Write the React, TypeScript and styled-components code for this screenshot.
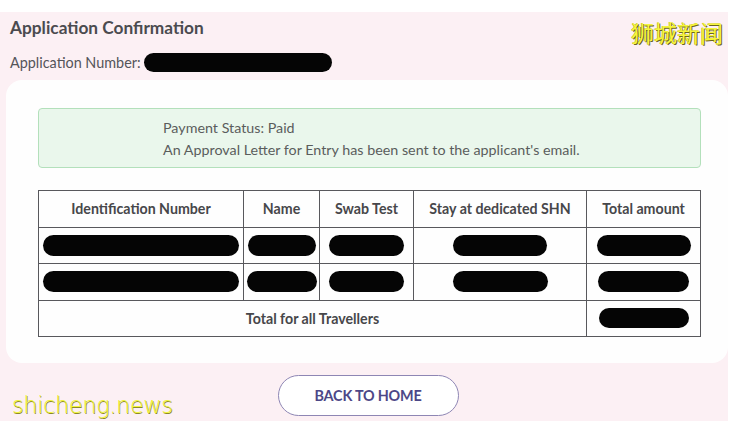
import styled, { createGlobalStyle } from 'styled-components';

const GlobalStyle = createGlobalStyle`
  html, body {
    margin: 0;
    padding: 0;
    background: #ffffff;
  }
  body {
    font-family: Lato, 'Open Sans', sans-serif;
  }
`;

const Page = styled.div`
  width: 735px;
  height: 421px;
  padding-top: 12px;
  box-sizing: border-box;
  overflow: hidden;
`;

const Sheet = styled.div`
  position: relative;
  width: 728px;
  height: 409px;
  background: #fcf0f4;
  box-sizing: border-box;
  padding: 6px 0 0 0;
  display: flex;
  flex-direction: column;
`;

const Title = styled.h1`
  margin: 0 0 0 10px;
  font-size: 17.3px;
  line-height: 20px;
  font-weight: 700;
  color: #4b4b4f;
`;

const NumberRow = styled.div`
  display: flex;
  align-items: center;
  gap: 3px;
  margin: 15px 0 0 10px;
  font-size: 14.4px;
  color: #55555a;
`;

const Redacted = styled.span<{ $w: number; $h?: number }>`
  display: inline-block;
  width: ${(p) => p.$w}px;
  height: ${(p) => p.$h ?? 21}px;
  border-radius: 11px;
  background: #050505;
  vertical-align: middle;
`;

const Card = styled.div`
  margin: 8px 0 0 6px;
  width: 722px;
  height: 283px;
  background: #fefefe;
  border-radius: 16px;
  box-sizing: border-box;
  padding: 28px 27px 0 32px;
`;

const Alert = styled.div`
  width: 663px;
  height: 60px;
  box-sizing: border-box;
  background: #eaf7ec;
  border: 1.5px solid #b3e0bb;
  border-radius: 4px;
  padding: 8px 0 0 124px;
  font-size: 14.3px;
  line-height: 22px;
  color: #5a5d5c;
`;

const Table = styled.table`
  margin-top: 22px;
  border-collapse: collapse;
  table-layout: fixed;
  font-size: 14.2px;
  color: #47474a;
`;

const Head = styled.th<{ $w: number }>`
  width: ${(p) => p.$w}px;
  height: 35.5px;
  border: 1px solid #58585c;
  font-weight: 700;
  text-align: center;
  padding: 0;
`;

const Cell = styled.td`
  height: 35.5px;
  border: 1px solid #58585c;
  text-align: center;
  padding: 0;
  font-weight: 700;
`;

const Footer = styled.div`
  display: flex;
  justify-content: center;
  padding: 12px 0 0 8px;
`;

const HomeButton = styled.button`
  width: 181px;
  height: 41px;
  border-radius: 21px;
  border: 1.5px solid #8e86b4;
  background: #ffffff;
  font-family: Lato, sans-serif;
  font-weight: 700;
  font-size: 14.4px;
  letter-spacing: -0.2px;
  color: #4d4787;
`;

const MarkCn = styled.div`
  position: absolute;
  top: 3px;
  right: 5px;
  font-family: 'Noto Sans CJK SC', sans-serif;
  font-size: 23px;
  letter-spacing: 0;
  color: #f6f63c;
  text-shadow: 1px 1px 0 #6b6420, -0.5px -0.5px 0 #b9b020;
`;

const MarkEn = styled.div`
  position: absolute;
  left: 12px;
  bottom: 3px;
  font-family: 'DejaVu Sans', sans-serif;
  font-weight: 200;
  font-size: 22.5px;
  letter-spacing: -0.4px;
  color: #f0f43c;
  text-shadow: 0.6px 0.6px 0 #8c8a24;
`;

const rows = [
  { id: 196, name: 68, swab: 75, stay: 94, total: 94 },
  { id: 196, name: 70, swab: 75, stay: 95, total: 91 },
];

export default function App() {
  return (
    <Page>
      <GlobalStyle />
      <Sheet>
        <Title>Application Confirmation</Title>
        <NumberRow>
          Application Number:
          <Redacted $w={188} $h={19} />
        </NumberRow>
        <Card>
          <Alert>
            Payment Status: Paid
            <br />
            An Approval Letter for Entry has been sent to the applicant's email.
          </Alert>
          <Table>
            <thead>
              <tr>
                <Head $w={204}>Identification Number</Head>
                <Head $w={75}>Name</Head>
                <Head $w={93}>Swab Test</Head>
                <Head $w={172}>Stay at dedicated SHN</Head>
                <Head $w={113}>Total amount</Head>
              </tr>
            </thead>
            <tbody>
              {rows.map((r, i) => (
                <tr key={i}>
                  <Cell><Redacted $w={r.id} /></Cell>
                  <Cell><Redacted $w={r.name} /></Cell>
                  <Cell><Redacted $w={r.swab} /></Cell>
                  <Cell><Redacted $w={r.stay} /></Cell>
                  <Cell><Redacted $w={r.total} /></Cell>
                </tr>
              ))}
              <tr>
                <Cell colSpan={4}>Total for all Travellers</Cell>
                <Cell><Redacted $w={90} $h={20} /></Cell>
              </tr>
            </tbody>
          </Table>
        </Card>
        <Footer>
          <HomeButton>BACK TO HOME</HomeButton>
        </Footer>
        <MarkCn>狮城新闻</MarkCn>
        <MarkEn>shicheng.news</MarkEn>
      </Sheet>
    </Page>
  );
}
